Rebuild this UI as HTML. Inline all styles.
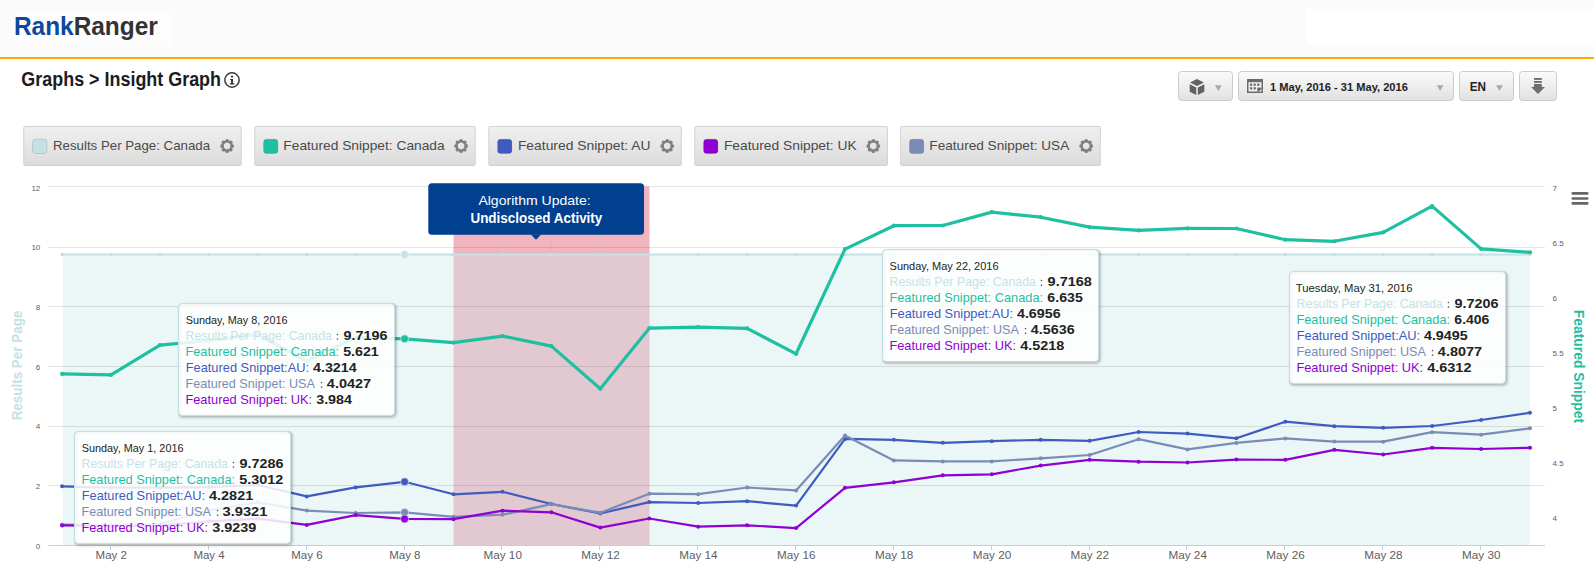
<!DOCTYPE html>
<html><head><meta charset="utf-8"><title>Insight Graph</title>
<style>
html,body{margin:0;padding:0;width:1594px;height:570px;overflow:hidden;background:#fff;}
svg text{font-family:"Liberation Sans",sans-serif;}
</style></head><body>
<svg width="1594" height="570" viewBox="0 0 1594 570" style="position:absolute;left:0;top:0">
<defs>
<linearGradient id="gb" x1="0" y1="0" x2="0" y2="1"><stop offset="0" stop-color="#fbfbfb"/><stop offset="1" stop-color="#e1e1e1"/></linearGradient>
<linearGradient id="gl" x1="0" y1="0" x2="0" y2="1"><stop offset="0" stop-color="#f0f0f0"/><stop offset="1" stop-color="#dcdcdc"/></linearGradient>
</defs>
<rect x="0" y="0" width="1594" height="57" fill="#fbfbfb"/>
<rect x="16" y="13" width="157" height="34" fill="#fdfdfd"/>
<rect x="1307" y="9" width="287" height="36" fill="#ffffff"/>
<rect x="0" y="57" width="1594" height="2" fill="#fcae00"/>
<text x="13.93" y="34.9" font-size="26.3" font-weight="bold" fill="#333" textLength="143.82" lengthAdjust="spacingAndGlyphs" ><tspan fill="#0b489e">Rank</tspan><tspan fill="#333333">Ranger</tspan></text>
<text x="21.37" y="85.9" font-size="20.3" font-weight="bold" fill="#1c1c1c" textLength="199.65" lengthAdjust="spacingAndGlyphs" >Graphs &gt; Insight Graph</text>
<circle cx="232" cy="80" r="7.2" fill="none" stroke="#3a3a3a" stroke-width="1.5"/>
<rect x="231" y="79" width="2.1" height="5.2" fill="#3a3a3a"/><rect x="229.8" y="83.3" width="4.6" height="1.2" fill="#3a3a3a"/><rect x="230" y="79" width="2" height="1" fill="#3a3a3a"/><circle cx="232.05" cy="76.6" r="1.15" fill="#3a3a3a"/>
<rect x="1178.5" y="71.5" width="54" height="29" rx="3" fill="url(#gb)" stroke="#cccccc"/>
<rect x="1238.5" y="71.5" width="215" height="29" rx="3" fill="url(#gb)" stroke="#cccccc"/>
<rect x="1459.5" y="71.5" width="54" height="29" rx="3" fill="url(#gb)" stroke="#cccccc"/>
<rect x="1519.5" y="71.5" width="37" height="29" rx="3" fill="url(#gb)" stroke="#cccccc"/>
<g fill="#626262"><path d="M1197,79 L1203.9,82.5 L1197,86 L1190.1,82.5 Z"/><path d="M1189.7,84.2 L1196.2,87.5 L1196.2,95 L1189.7,91.7 Z"/><path d="M1204.3,84.2 L1197.8,87.5 L1197.8,95 L1204.3,91.7 Z"/></g>
<path d="M1215,85.2 L1221.7,85.2 L1218.35,91 Z" fill="#a8a8a8"/>
<path d="M1436.9,85.2 L1443.3,85.2 L1440.1,91 Z" fill="#a8a8a8"/>
<path d="M1496.2,85.3 L1502.8,85.3 L1499.5,90.9 Z" fill="#a8a8a8"/>
<g><rect x="1247" y="79" width="16" height="14" fill="#6b6b6b"/><rect x="1248.5" y="82.2" width="13" height="9.3" fill="#efefef"/><g fill="#6b6b6b"><rect x="1250" y="83.6" width="2.2" height="2.2"/><rect x="1253.6" y="83.6" width="2.2" height="2.2"/><rect x="1257.2" y="83.6" width="2.2" height="2.2"/><rect x="1250" y="87.2" width="2.2" height="2.2"/><rect x="1253.6" y="87.2" width="2.2" height="2.2"/><rect x="1257.3" y="87.6" width="4.2" height="3.9"/></g><path d="M1259,91.4 L1261.4,89 L1261.4,91.4 Z" fill="#efefef"/></g>
<text x="1270.08" y="90.9" font-size="11.6" font-weight="bold" fill="#222" textLength="137.79" lengthAdjust="spacingAndGlyphs" >1 May, 2016 - 31 May, 2016</text>
<text x="1469.65" y="90.7" font-size="12.3" font-weight="bold" fill="#222" textLength="16.30" lengthAdjust="spacingAndGlyphs" >EN</text>
<g fill="#6e6e6e"><rect x="1534" y="78" width="7.8" height="1.9"/><rect x="1534" y="81" width="7.8" height="1.9"/><rect x="1534" y="84" width="7.8" height="3.3"/><path d="M1531,87.1 L1545,87.1 L1538,94 Z"/></g>
<rect x="23.8" y="126.5" width="217.4" height="39" rx="1.2" fill="url(#gl)" stroke="#d2d2d2"/>
<rect x="32.6" y="139.2" width="14.3" height="14.3" rx="3" fill="#c4e2e6" stroke="#000" stroke-opacity="0.12" stroke-width="1"/>
<text x="53.04" y="149.9" font-size="13.2" font-weight="normal" fill="#4a4a4a" textLength="157.02" lengthAdjust="spacingAndGlyphs" >Results Per Page: Canada</text>
<circle cx="227.10" cy="146.00" r="4.55" fill="none" stroke="#808080" stroke-width="2.3"/><circle cx="232.25" cy="146.00" r="1.85" fill="#808080"/><circle cx="230.74" cy="149.64" r="1.85" fill="#808080"/><circle cx="227.10" cy="151.15" r="1.85" fill="#808080"/><circle cx="223.46" cy="149.64" r="1.85" fill="#808080"/><circle cx="221.95" cy="146.00" r="1.85" fill="#808080"/><circle cx="223.46" cy="142.36" r="1.85" fill="#808080"/><circle cx="227.10" cy="140.85" r="1.85" fill="#808080"/><circle cx="230.74" cy="142.36" r="1.85" fill="#808080"/>
<rect x="254.8" y="126.5" width="220.4" height="39" rx="1.2" fill="url(#gl)" stroke="#d2d2d2"/>
<rect x="263.6" y="139.2" width="14.3" height="14.3" rx="3" fill="#1fbfa2" stroke="#000" stroke-opacity="0.12" stroke-width="1"/>
<text x="283.34" y="149.9" font-size="13.2" font-weight="normal" fill="#4a4a4a" textLength="161.33" lengthAdjust="spacingAndGlyphs" >Featured Snippet: Canada</text>
<circle cx="461.10" cy="146.00" r="4.55" fill="none" stroke="#808080" stroke-width="2.3"/><circle cx="466.25" cy="146.00" r="1.85" fill="#808080"/><circle cx="464.74" cy="149.64" r="1.85" fill="#808080"/><circle cx="461.10" cy="151.15" r="1.85" fill="#808080"/><circle cx="457.46" cy="149.64" r="1.85" fill="#808080"/><circle cx="455.95" cy="146.00" r="1.85" fill="#808080"/><circle cx="457.46" cy="142.36" r="1.85" fill="#808080"/><circle cx="461.10" cy="140.85" r="1.85" fill="#808080"/><circle cx="464.74" cy="142.36" r="1.85" fill="#808080"/>
<rect x="488.8" y="126.5" width="192.5" height="39" rx="1.2" fill="url(#gl)" stroke="#d2d2d2"/>
<rect x="497.6" y="139.2" width="14.3" height="14.3" rx="3" fill="#3f5bbf" stroke="#000" stroke-opacity="0.12" stroke-width="1"/>
<text x="517.92" y="149.9" font-size="13.2" font-weight="normal" fill="#4a4a4a" textLength="132.55" lengthAdjust="spacingAndGlyphs" >Featured Snippet: AU</text>
<circle cx="667.20" cy="146.00" r="4.55" fill="none" stroke="#808080" stroke-width="2.3"/><circle cx="672.35" cy="146.00" r="1.85" fill="#808080"/><circle cx="670.84" cy="149.64" r="1.85" fill="#808080"/><circle cx="667.20" cy="151.15" r="1.85" fill="#808080"/><circle cx="663.56" cy="149.64" r="1.85" fill="#808080"/><circle cx="662.05" cy="146.00" r="1.85" fill="#808080"/><circle cx="663.56" cy="142.36" r="1.85" fill="#808080"/><circle cx="667.20" cy="140.85" r="1.85" fill="#808080"/><circle cx="670.84" cy="142.36" r="1.85" fill="#808080"/>
<rect x="694.8" y="126.5" width="192.6" height="39" rx="1.2" fill="url(#gl)" stroke="#d2d2d2"/>
<rect x="703.6" y="139.2" width="14.3" height="14.3" rx="3" fill="#8f00d2" stroke="#000" stroke-opacity="0.12" stroke-width="1"/>
<text x="723.94" y="149.9" font-size="13.2" font-weight="normal" fill="#4a4a4a" textLength="132.72" lengthAdjust="spacingAndGlyphs" >Featured Snippet: UK</text>
<circle cx="873.30" cy="146.00" r="4.55" fill="none" stroke="#808080" stroke-width="2.3"/><circle cx="878.45" cy="146.00" r="1.85" fill="#808080"/><circle cx="876.94" cy="149.64" r="1.85" fill="#808080"/><circle cx="873.30" cy="151.15" r="1.85" fill="#808080"/><circle cx="869.66" cy="149.64" r="1.85" fill="#808080"/><circle cx="868.15" cy="146.00" r="1.85" fill="#808080"/><circle cx="869.66" cy="142.36" r="1.85" fill="#808080"/><circle cx="873.30" cy="140.85" r="1.85" fill="#808080"/><circle cx="876.94" cy="142.36" r="1.85" fill="#808080"/>
<rect x="900.7" y="126.5" width="199.6" height="39" rx="1.2" fill="url(#gl)" stroke="#d2d2d2"/>
<rect x="909.5" y="139.2" width="14.3" height="14.3" rx="3" fill="#7a8cb6" stroke="#000" stroke-opacity="0.12" stroke-width="1"/>
<text x="929.39" y="149.9" font-size="13.2" font-weight="normal" fill="#4a4a4a" textLength="139.83" lengthAdjust="spacingAndGlyphs" >Featured Snippet: USA</text>
<circle cx="1086.20" cy="146.00" r="4.55" fill="none" stroke="#808080" stroke-width="2.3"/><circle cx="1091.35" cy="146.00" r="1.85" fill="#808080"/><circle cx="1089.84" cy="149.64" r="1.85" fill="#808080"/><circle cx="1086.20" cy="151.15" r="1.85" fill="#808080"/><circle cx="1082.56" cy="149.64" r="1.85" fill="#808080"/><circle cx="1081.05" cy="146.00" r="1.85" fill="#808080"/><circle cx="1082.56" cy="142.36" r="1.85" fill="#808080"/><circle cx="1086.20" cy="140.85" r="1.85" fill="#808080"/><circle cx="1089.84" cy="142.36" r="1.85" fill="#808080"/>
<rect x="453.5" y="186.5" width="196" height="359" fill="#e8889a" fill-opacity="0.62"/>
<line x1="551.5" y1="186.5" x2="551.5" y2="545.5" stroke="#e8899e" stroke-opacity="0.15"/>
<path d="M62.9,254.6 L111.0,254.6 L160.0,254.6 L208.9,254.6 L257.8,254.6 L306.8,254.6 L355.7,254.6 L404.6,254.6 L453.5,254.6 L502.5,254.6 L551.4,254.6 L600.3,254.6 L649.3,254.6 L698.2,254.6 L747.1,254.6 L796.1,254.6 L845.0,254.6 L893.9,254.6 L942.8,254.6 L991.8,254.6 L1040.7,254.6 L1089.6,254.6 L1138.6,254.6 L1187.5,254.6 L1236.4,254.6 L1285.3,254.6 L1334.3,254.6 L1383.2,254.6 L1432.1,254.6 L1481.1,254.6 L1530.0,254.6 L1530.0,545.5 L62.9,545.5 Z" fill="#cde8ea" fill-opacity="0.4"/>
<line x1="48" y1="186.5" x2="1545" y2="186.5" stroke="#000" stroke-opacity="0.1"/>
<line x1="48" y1="247.5" x2="1545" y2="247.5" stroke="#000" stroke-opacity="0.1"/>
<line x1="48" y1="306.5" x2="1545" y2="306.5" stroke="#000" stroke-opacity="0.1"/>
<line x1="48" y1="366.5" x2="1545" y2="366.5" stroke="#000" stroke-opacity="0.1"/>
<line x1="48" y1="426.5" x2="1545" y2="426.5" stroke="#000" stroke-opacity="0.1"/>
<line x1="48" y1="485.5" x2="1545" y2="485.5" stroke="#000" stroke-opacity="0.1"/>
<line x1="48" y1="545.5" x2="1545" y2="545.5" stroke="#c0d0e0"/>
<line x1="110.5" y1="546" x2="110.5" y2="550" stroke="#c0d0e0"/>
<text x="95.6" y="558.6" font-size="10.9" fill="#606060" textLength="31.3" lengthAdjust="spacingAndGlyphs">May 2</text>
<line x1="208.5" y1="546" x2="208.5" y2="550" stroke="#c0d0e0"/>
<text x="193.4" y="558.6" font-size="10.9" fill="#606060" textLength="31.3" lengthAdjust="spacingAndGlyphs">May 4</text>
<line x1="306.5" y1="546" x2="306.5" y2="550" stroke="#c0d0e0"/>
<text x="291.3" y="558.6" font-size="10.9" fill="#606060" textLength="31.3" lengthAdjust="spacingAndGlyphs">May 6</text>
<line x1="404.5" y1="546" x2="404.5" y2="550" stroke="#c0d0e0"/>
<text x="389.2" y="558.6" font-size="10.9" fill="#606060" textLength="31.3" lengthAdjust="spacingAndGlyphs">May 8</text>
<line x1="501.5" y1="546" x2="501.5" y2="550" stroke="#c0d0e0"/>
<text x="483.5" y="558.6" font-size="10.9" fill="#606060" textLength="38.4" lengthAdjust="spacingAndGlyphs">May 10</text>
<line x1="599.5" y1="546" x2="599.5" y2="550" stroke="#c0d0e0"/>
<text x="581.3" y="558.6" font-size="10.9" fill="#606060" textLength="38.4" lengthAdjust="spacingAndGlyphs">May 12</text>
<line x1="697.5" y1="546" x2="697.5" y2="550" stroke="#c0d0e0"/>
<text x="679.2" y="558.6" font-size="10.9" fill="#606060" textLength="38.4" lengthAdjust="spacingAndGlyphs">May 14</text>
<line x1="795.5" y1="546" x2="795.5" y2="550" stroke="#c0d0e0"/>
<text x="777.1" y="558.6" font-size="10.9" fill="#606060" textLength="38.4" lengthAdjust="spacingAndGlyphs">May 16</text>
<line x1="893.5" y1="546" x2="893.5" y2="550" stroke="#c0d0e0"/>
<text x="874.9" y="558.6" font-size="10.9" fill="#606060" textLength="38.4" lengthAdjust="spacingAndGlyphs">May 18</text>
<line x1="991.5" y1="546" x2="991.5" y2="550" stroke="#c0d0e0"/>
<text x="972.8" y="558.6" font-size="10.9" fill="#606060" textLength="38.4" lengthAdjust="spacingAndGlyphs">May 20</text>
<line x1="1089.5" y1="546" x2="1089.5" y2="550" stroke="#c0d0e0"/>
<text x="1070.6" y="558.6" font-size="10.9" fill="#606060" textLength="38.4" lengthAdjust="spacingAndGlyphs">May 22</text>
<line x1="1186.5" y1="546" x2="1186.5" y2="550" stroke="#c0d0e0"/>
<text x="1168.5" y="558.6" font-size="10.9" fill="#606060" textLength="38.4" lengthAdjust="spacingAndGlyphs">May 24</text>
<line x1="1284.5" y1="546" x2="1284.5" y2="550" stroke="#c0d0e0"/>
<text x="1266.3" y="558.6" font-size="10.9" fill="#606060" textLength="38.4" lengthAdjust="spacingAndGlyphs">May 26</text>
<line x1="1382.5" y1="546" x2="1382.5" y2="550" stroke="#c0d0e0"/>
<text x="1364.2" y="558.6" font-size="10.9" fill="#606060" textLength="38.4" lengthAdjust="spacingAndGlyphs">May 28</text>
<line x1="1480.5" y1="546" x2="1480.5" y2="550" stroke="#c0d0e0"/>
<text x="1462.1" y="558.6" font-size="10.9" fill="#606060" textLength="38.4" lengthAdjust="spacingAndGlyphs">May 30</text>
<text x="40.3" y="191" font-size="8" fill="#606060" text-anchor="end">12</text>
<text x="40.3" y="250" font-size="8" fill="#606060" text-anchor="end">10</text>
<text x="40.3" y="310" font-size="8" fill="#606060" text-anchor="end">8</text>
<text x="40.3" y="370" font-size="8" fill="#606060" text-anchor="end">6</text>
<text x="40.3" y="429" font-size="8" fill="#606060" text-anchor="end">4</text>
<text x="40.3" y="489" font-size="8" fill="#606060" text-anchor="end">2</text>
<text x="40.3" y="549" font-size="8" fill="#606060" text-anchor="end">0</text>
<text x="1552.6" y="190.9" font-size="8" fill="#606060">7</text>
<text x="1552.6" y="245.9" font-size="8" fill="#606060">6.5</text>
<text x="1552.6" y="300.9" font-size="8" fill="#606060">6</text>
<text x="1552.6" y="355.9" font-size="8" fill="#606060">5.5</text>
<text x="1552.6" y="410.9" font-size="8" fill="#606060">5</text>
<text x="1552.6" y="465.9" font-size="8" fill="#606060">4.5</text>
<text x="1552.6" y="520.9" font-size="8" fill="#606060">4</text>
<polyline points="62.1,254.6 111.0,254.6 160.0,254.6 208.9,254.6 257.8,254.6 306.8,254.6 355.7,254.6 404.6,254.6 453.5,254.6 502.5,254.6 551.4,254.6 600.3,254.6 649.3,254.6 698.2,254.6 747.1,254.6 796.1,254.6 845.0,254.6 893.9,254.6 942.8,254.6 991.8,254.6 1040.7,254.6 1089.6,254.6 1138.6,254.6 1187.5,254.6 1236.4,254.6 1285.3,254.6 1334.3,254.6 1383.2,254.6 1432.1,254.6 1481.1,254.6 1530.0,254.6" fill="none" stroke="#c4e2e6" stroke-width="2" stroke-linejoin="round"/>
<circle cx="62.1" cy="254.6" r="1.8" fill="#c4e2e6"/><circle cx="111.0" cy="254.6" r="1.8" fill="#c4e2e6"/><circle cx="160.0" cy="254.6" r="1.8" fill="#c4e2e6"/><circle cx="208.9" cy="254.6" r="1.8" fill="#c4e2e6"/><circle cx="257.8" cy="254.6" r="1.8" fill="#c4e2e6"/><circle cx="306.8" cy="254.6" r="1.8" fill="#c4e2e6"/><circle cx="355.7" cy="254.6" r="1.8" fill="#c4e2e6"/><circle cx="404.6" cy="254.6" r="4.0" fill="#c4e2e6" stroke="#fff" stroke-opacity="0.55" stroke-width="1"/><circle cx="453.5" cy="254.6" r="1.8" fill="#c4e2e6"/><circle cx="502.5" cy="254.6" r="1.8" fill="#c4e2e6"/><circle cx="551.4" cy="254.6" r="1.8" fill="#c4e2e6"/><circle cx="600.3" cy="254.6" r="1.8" fill="#c4e2e6"/><circle cx="649.3" cy="254.6" r="1.8" fill="#c4e2e6"/><circle cx="698.2" cy="254.6" r="1.8" fill="#c4e2e6"/><circle cx="747.1" cy="254.6" r="1.8" fill="#c4e2e6"/><circle cx="796.1" cy="254.6" r="1.8" fill="#c4e2e6"/><circle cx="845.0" cy="254.6" r="1.8" fill="#c4e2e6"/><circle cx="893.9" cy="254.6" r="1.8" fill="#c4e2e6"/><circle cx="942.8" cy="254.6" r="1.8" fill="#c4e2e6"/><circle cx="991.8" cy="254.6" r="1.8" fill="#c4e2e6"/><circle cx="1040.7" cy="254.6" r="1.8" fill="#c4e2e6"/><circle cx="1089.6" cy="254.6" r="1.8" fill="#c4e2e6"/><circle cx="1138.6" cy="254.6" r="1.8" fill="#c4e2e6"/><circle cx="1187.5" cy="254.6" r="1.8" fill="#c4e2e6"/><circle cx="1236.4" cy="254.6" r="1.8" fill="#c4e2e6"/><circle cx="1285.3" cy="254.6" r="1.8" fill="#c4e2e6"/><circle cx="1334.3" cy="254.6" r="1.8" fill="#c4e2e6"/><circle cx="1383.2" cy="254.6" r="1.8" fill="#c4e2e6"/><circle cx="1432.1" cy="254.6" r="1.8" fill="#c4e2e6"/><circle cx="1481.1" cy="254.6" r="1.8" fill="#c4e2e6"/><circle cx="1530.0" cy="254.6" r="1.8" fill="#c4e2e6"/>
<polyline points="62.1,373.9 111.0,374.9 160.0,345.1 208.9,340.5 257.8,334.5 306.8,361.0 355.7,337.3 404.6,338.8 453.5,342.6 502.5,336.1 551.4,346.1 600.3,388.8 649.3,328.2 698.2,327.1 747.1,328.4 796.1,353.8 845.0,249.1 893.9,225.7 942.8,225.5 991.8,212.1 1040.7,217.2 1089.6,227.1 1138.6,230.4 1187.5,228.4 1236.4,228.5 1285.3,239.7 1334.3,241.3 1383.2,232.4 1432.1,206.1 1481.1,248.9 1530.0,252.3" fill="none" stroke="#1fbfa2" stroke-width="3.2" stroke-linejoin="round"/>
<circle cx="62.1" cy="373.9" r="2.1" fill="#1fbfa2"/><circle cx="111.0" cy="374.9" r="2.1" fill="#1fbfa2"/><circle cx="160.0" cy="345.1" r="2.1" fill="#1fbfa2"/><circle cx="208.9" cy="340.5" r="2.1" fill="#1fbfa2"/><circle cx="257.8" cy="334.5" r="2.1" fill="#1fbfa2"/><circle cx="306.8" cy="361.0" r="2.1" fill="#1fbfa2"/><circle cx="355.7" cy="337.3" r="2.1" fill="#1fbfa2"/><circle cx="404.6" cy="338.8" r="4.0" fill="#1fbfa2" stroke="#fff" stroke-opacity="0.55" stroke-width="1"/><circle cx="453.5" cy="342.6" r="2.1" fill="#1fbfa2"/><circle cx="502.5" cy="336.1" r="2.1" fill="#1fbfa2"/><circle cx="551.4" cy="346.1" r="2.1" fill="#1fbfa2"/><circle cx="600.3" cy="388.8" r="2.1" fill="#1fbfa2"/><circle cx="649.3" cy="328.2" r="2.1" fill="#1fbfa2"/><circle cx="698.2" cy="327.1" r="2.1" fill="#1fbfa2"/><circle cx="747.1" cy="328.4" r="2.1" fill="#1fbfa2"/><circle cx="796.1" cy="353.8" r="2.1" fill="#1fbfa2"/><circle cx="845.0" cy="249.1" r="2.1" fill="#1fbfa2"/><circle cx="893.9" cy="225.7" r="2.1" fill="#1fbfa2"/><circle cx="942.8" cy="225.5" r="2.1" fill="#1fbfa2"/><circle cx="991.8" cy="212.1" r="2.1" fill="#1fbfa2"/><circle cx="1040.7" cy="217.2" r="2.1" fill="#1fbfa2"/><circle cx="1089.6" cy="227.1" r="2.1" fill="#1fbfa2"/><circle cx="1138.6" cy="230.4" r="2.1" fill="#1fbfa2"/><circle cx="1187.5" cy="228.4" r="2.1" fill="#1fbfa2"/><circle cx="1236.4" cy="228.5" r="2.1" fill="#1fbfa2"/><circle cx="1285.3" cy="239.7" r="2.1" fill="#1fbfa2"/><circle cx="1334.3" cy="241.3" r="2.1" fill="#1fbfa2"/><circle cx="1383.2" cy="232.4" r="2.1" fill="#1fbfa2"/><circle cx="1432.1" cy="206.1" r="2.1" fill="#1fbfa2"/><circle cx="1481.1" cy="248.9" r="2.1" fill="#1fbfa2"/><circle cx="1530.0" cy="252.3" r="2.1" fill="#1fbfa2"/>
<polyline points="62.1,486.3 111.0,487.7 160.0,487.7 208.9,487.1 257.8,485.0 306.8,496.4 355.7,487.4 404.6,481.8 453.5,494.3 502.5,491.8 551.4,504.0 600.3,513.5 649.3,502.1 698.2,503.0 747.1,501.2 796.1,505.6 845.0,438.9 893.9,439.8 942.8,442.8 991.8,441.2 1040.7,439.8 1089.6,440.8 1138.6,432.0 1187.5,433.6 1236.4,438.3 1285.3,421.7 1334.3,426.2 1383.2,427.8 1432.1,426.0 1481.1,420.0 1530.0,412.8" fill="none" stroke="#3f5bbf" stroke-width="2.2" stroke-linejoin="round"/>
<circle cx="62.1" cy="486.3" r="2.0" fill="#3f5bbf"/><circle cx="111.0" cy="487.7" r="2.0" fill="#3f5bbf"/><circle cx="160.0" cy="487.7" r="2.0" fill="#3f5bbf"/><circle cx="208.9" cy="487.1" r="2.0" fill="#3f5bbf"/><circle cx="257.8" cy="485.0" r="2.0" fill="#3f5bbf"/><circle cx="306.8" cy="496.4" r="2.0" fill="#3f5bbf"/><circle cx="355.7" cy="487.4" r="2.0" fill="#3f5bbf"/><circle cx="404.6" cy="481.8" r="4.0" fill="#3f5bbf" stroke="#fff" stroke-opacity="0.55" stroke-width="1"/><circle cx="453.5" cy="494.3" r="2.0" fill="#3f5bbf"/><circle cx="502.5" cy="491.8" r="2.0" fill="#3f5bbf"/><circle cx="551.4" cy="504.0" r="2.0" fill="#3f5bbf"/><circle cx="600.3" cy="513.5" r="2.0" fill="#3f5bbf"/><circle cx="649.3" cy="502.1" r="2.0" fill="#3f5bbf"/><circle cx="698.2" cy="503.0" r="2.0" fill="#3f5bbf"/><circle cx="747.1" cy="501.2" r="2.0" fill="#3f5bbf"/><circle cx="796.1" cy="505.6" r="2.0" fill="#3f5bbf"/><circle cx="845.0" cy="438.9" r="2.0" fill="#3f5bbf"/><circle cx="893.9" cy="439.8" r="2.0" fill="#3f5bbf"/><circle cx="942.8" cy="442.8" r="2.0" fill="#3f5bbf"/><circle cx="991.8" cy="441.2" r="2.0" fill="#3f5bbf"/><circle cx="1040.7" cy="439.8" r="2.0" fill="#3f5bbf"/><circle cx="1089.6" cy="440.8" r="2.0" fill="#3f5bbf"/><circle cx="1138.6" cy="432.0" r="2.0" fill="#3f5bbf"/><circle cx="1187.5" cy="433.6" r="2.0" fill="#3f5bbf"/><circle cx="1236.4" cy="438.3" r="2.0" fill="#3f5bbf"/><circle cx="1285.3" cy="421.7" r="2.0" fill="#3f5bbf"/><circle cx="1334.3" cy="426.2" r="2.0" fill="#3f5bbf"/><circle cx="1383.2" cy="427.8" r="2.0" fill="#3f5bbf"/><circle cx="1432.1" cy="426.0" r="2.0" fill="#3f5bbf"/><circle cx="1481.1" cy="420.0" r="2.0" fill="#3f5bbf"/><circle cx="1530.0" cy="412.8" r="2.0" fill="#3f5bbf"/>
<polyline points="62.1,524.5 111.0,525.0 160.0,524.0 208.9,510.3 257.8,502.3 306.8,510.6 355.7,513.0 404.6,512.3 453.5,516.8 502.5,514.7 551.4,504.2 600.3,512.7 649.3,493.7 698.2,494.2 747.1,487.5 796.1,490.4 845.0,435.4 893.9,460.4 942.8,461.4 991.8,461.4 1040.7,458.3 1089.6,455.0 1138.6,439.2 1187.5,449.4 1236.4,442.9 1285.3,438.4 1334.3,441.6 1383.2,441.7 1432.1,432.2 1481.1,434.7 1530.0,428.3" fill="none" stroke="#7a8cb6" stroke-width="2.2" stroke-linejoin="round"/>
<circle cx="62.1" cy="524.5" r="2.0" fill="#7a8cb6"/><circle cx="111.0" cy="525.0" r="2.0" fill="#7a8cb6"/><circle cx="160.0" cy="524.0" r="2.0" fill="#7a8cb6"/><circle cx="208.9" cy="510.3" r="2.0" fill="#7a8cb6"/><circle cx="257.8" cy="502.3" r="2.0" fill="#7a8cb6"/><circle cx="306.8" cy="510.6" r="2.0" fill="#7a8cb6"/><circle cx="355.7" cy="513.0" r="2.0" fill="#7a8cb6"/><circle cx="404.6" cy="512.3" r="4.0" fill="#7a8cb6" stroke="#fff" stroke-opacity="0.55" stroke-width="1"/><circle cx="453.5" cy="516.8" r="2.0" fill="#7a8cb6"/><circle cx="502.5" cy="514.7" r="2.0" fill="#7a8cb6"/><circle cx="551.4" cy="504.2" r="2.0" fill="#7a8cb6"/><circle cx="600.3" cy="512.7" r="2.0" fill="#7a8cb6"/><circle cx="649.3" cy="493.7" r="2.0" fill="#7a8cb6"/><circle cx="698.2" cy="494.2" r="2.0" fill="#7a8cb6"/><circle cx="747.1" cy="487.5" r="2.0" fill="#7a8cb6"/><circle cx="796.1" cy="490.4" r="2.0" fill="#7a8cb6"/><circle cx="845.0" cy="435.4" r="2.0" fill="#7a8cb6"/><circle cx="893.9" cy="460.4" r="2.0" fill="#7a8cb6"/><circle cx="942.8" cy="461.4" r="2.0" fill="#7a8cb6"/><circle cx="991.8" cy="461.4" r="2.0" fill="#7a8cb6"/><circle cx="1040.7" cy="458.3" r="2.0" fill="#7a8cb6"/><circle cx="1089.6" cy="455.0" r="2.0" fill="#7a8cb6"/><circle cx="1138.6" cy="439.2" r="2.0" fill="#7a8cb6"/><circle cx="1187.5" cy="449.4" r="2.0" fill="#7a8cb6"/><circle cx="1236.4" cy="442.9" r="2.0" fill="#7a8cb6"/><circle cx="1285.3" cy="438.4" r="2.0" fill="#7a8cb6"/><circle cx="1334.3" cy="441.6" r="2.0" fill="#7a8cb6"/><circle cx="1383.2" cy="441.7" r="2.0" fill="#7a8cb6"/><circle cx="1432.1" cy="432.2" r="2.0" fill="#7a8cb6"/><circle cx="1481.1" cy="434.7" r="2.0" fill="#7a8cb6"/><circle cx="1530.0" cy="428.3" r="2.0" fill="#7a8cb6"/>
<polyline points="62.1,525.4 111.0,526.0 160.0,525.5 208.9,521.3 257.8,518.7 306.8,524.9 355.7,515.1 404.6,518.9 453.5,519.2 502.5,510.7 551.4,512.3 600.3,527.6 649.3,518.5 698.2,526.7 747.1,525.3 796.1,528.1 845.0,487.8 893.9,482.3 942.8,475.3 991.8,474.3 1040.7,465.6 1089.6,459.8 1138.6,461.7 1187.5,462.5 1236.4,459.6 1285.3,459.8 1334.3,449.8 1383.2,454.5 1432.1,447.8 1481.1,449.0 1530.0,447.8" fill="none" stroke="#8f00d2" stroke-width="2.2" stroke-linejoin="round"/>
<circle cx="62.1" cy="525.4" r="2.0" fill="#8f00d2"/><circle cx="111.0" cy="526.0" r="2.0" fill="#8f00d2"/><circle cx="160.0" cy="525.5" r="2.0" fill="#8f00d2"/><circle cx="208.9" cy="521.3" r="2.0" fill="#8f00d2"/><circle cx="257.8" cy="518.7" r="2.0" fill="#8f00d2"/><circle cx="306.8" cy="524.9" r="2.0" fill="#8f00d2"/><circle cx="355.7" cy="515.1" r="2.0" fill="#8f00d2"/><circle cx="404.6" cy="518.9" r="4.0" fill="#8f00d2" stroke="#fff" stroke-opacity="0.55" stroke-width="1"/><circle cx="453.5" cy="519.2" r="2.0" fill="#8f00d2"/><circle cx="502.5" cy="510.7" r="2.0" fill="#8f00d2"/><circle cx="551.4" cy="512.3" r="2.0" fill="#8f00d2"/><circle cx="600.3" cy="527.6" r="2.0" fill="#8f00d2"/><circle cx="649.3" cy="518.5" r="2.0" fill="#8f00d2"/><circle cx="698.2" cy="526.7" r="2.0" fill="#8f00d2"/><circle cx="747.1" cy="525.3" r="2.0" fill="#8f00d2"/><circle cx="796.1" cy="528.1" r="2.0" fill="#8f00d2"/><circle cx="845.0" cy="487.8" r="2.0" fill="#8f00d2"/><circle cx="893.9" cy="482.3" r="2.0" fill="#8f00d2"/><circle cx="942.8" cy="475.3" r="2.0" fill="#8f00d2"/><circle cx="991.8" cy="474.3" r="2.0" fill="#8f00d2"/><circle cx="1040.7" cy="465.6" r="2.0" fill="#8f00d2"/><circle cx="1089.6" cy="459.8" r="2.0" fill="#8f00d2"/><circle cx="1138.6" cy="461.7" r="2.0" fill="#8f00d2"/><circle cx="1187.5" cy="462.5" r="2.0" fill="#8f00d2"/><circle cx="1236.4" cy="459.6" r="2.0" fill="#8f00d2"/><circle cx="1285.3" cy="459.8" r="2.0" fill="#8f00d2"/><circle cx="1334.3" cy="449.8" r="2.0" fill="#8f00d2"/><circle cx="1383.2" cy="454.5" r="2.0" fill="#8f00d2"/><circle cx="1432.1" cy="447.8" r="2.0" fill="#8f00d2"/><circle cx="1481.1" cy="449.0" r="2.0" fill="#8f00d2"/><circle cx="1530.0" cy="447.8" r="2.0" fill="#8f00d2"/>
<text x="310.34" y="0" font-size="14.5" font-weight="bold" fill="#c4e2e6" textLength="109.73" lengthAdjust="spacingAndGlyphs" transform="translate(21.8,730.7) rotate(-90)">Results Per Page</text>
<text x="309.78" y="0" font-size="14.2" font-weight="bold" fill="#1fbfa2" textLength="113.40" lengthAdjust="spacingAndGlyphs" transform="translate(1574,0) rotate(90)">Featured Snippet</text>
<line x1="1572.8" y1="193.4" x2="1587.2" y2="193.4" stroke="#666" stroke-width="2.7" stroke-linecap="round"/>
<line x1="1572.8" y1="198.5" x2="1587.2" y2="198.5" stroke="#666" stroke-width="2.7" stroke-linecap="round"/>
<line x1="1572.8" y1="203.4" x2="1587.2" y2="203.4" stroke="#666" stroke-width="2.7" stroke-linecap="round"/>
<rect x="428.3" y="183.3" width="215.7" height="51.5" rx="3.5" fill="#00408f"/>
<path d="M530.8,234.6 L536,239.8 L541.2,234.6 Z" fill="#00408f"/>
<text x="478.40" y="205.1" font-size="13.5" font-weight="normal" fill="#fff" textLength="112.31" lengthAdjust="spacingAndGlyphs" >Algorithm Update:</text>
<text x="470.42" y="222.9" font-size="13.8" font-weight="bold" fill="#fff" textLength="131.94" lengthAdjust="spacingAndGlyphs" >Undisclosed Activity</text>
<rect x="76.0" y="433.0" width="216" height="112" rx="3.5" fill="none" stroke="#000" stroke-opacity="0.05" stroke-width="5"/><rect x="75.5" y="432.5" width="216" height="112" rx="3.5" fill="none" stroke="#000" stroke-opacity="0.1" stroke-width="3"/><rect x="75.0" y="432.0" width="216" height="112" rx="3.5" fill="none" stroke="#000" stroke-opacity="0.15" stroke-width="1"/><rect x="74.5" y="431.5" width="216" height="112" rx="3.5" fill="#ffffff" fill-opacity="0.86" stroke="#c4dfe2" stroke-width="1"/><text x="81.65" y="451.9" font-size="10.3" font-weight="normal" fill="#222" textLength="101.89" lengthAdjust="spacingAndGlyphs" >Sunday, May 1, 2016</text><text x="81.61" y="467.8" font-size="11.9" font-weight="normal" fill="#c4e2e6" textLength="146.32" lengthAdjust="spacingAndGlyphs" >Results Per Page: Canada</text><rect x="232.80" y="461.80" width="1.3" height="1.4" fill="#555"/><rect x="232.80" y="466.40" width="1.3" height="1.4" fill="#555"/><text x="239.60" y="467.8" font-size="13.0" font-weight="bold" fill="#222" textLength="43.99" lengthAdjust="spacingAndGlyphs" >9.7286</text><text x="81.43" y="483.83" font-size="11.9" font-weight="normal" fill="#1fbfa2" textLength="153.67" lengthAdjust="spacingAndGlyphs" >Featured Snippet: Canada:</text><text x="239.17" y="483.83" font-size="13.0" font-weight="bold" fill="#222" textLength="44.06" lengthAdjust="spacingAndGlyphs" >5.3012</text><text x="81.66" y="499.86" font-size="11.9" font-weight="normal" fill="#3f5bbf" textLength="123.42" lengthAdjust="spacingAndGlyphs" >Featured Snippet:AU:</text><text x="208.96" y="499.86" font-size="13.0" font-weight="bold" fill="#222" textLength="44.32" lengthAdjust="spacingAndGlyphs" >4.2821</text><text x="81.53" y="515.89" font-size="11.9" font-weight="normal" fill="#7a8cb6" textLength="129.29" lengthAdjust="spacingAndGlyphs" >Featured Snippet: USA</text><rect x="216.90" y="509.89" width="1.3" height="1.4" fill="#555"/><rect x="216.90" y="514.49" width="1.3" height="1.4" fill="#555"/><text x="222.49" y="515.89" font-size="13.0" font-weight="bold" fill="#222" textLength="44.97" lengthAdjust="spacingAndGlyphs" >3.9321</text><text x="81.43" y="531.92" font-size="11.9" font-weight="normal" fill="#8f00d2" textLength="126.68" lengthAdjust="spacingAndGlyphs" >Featured Snippet: UK:</text><text x="212.17" y="531.92" font-size="13.0" font-weight="bold" fill="#222" textLength="44.00" lengthAdjust="spacingAndGlyphs" >3.9239</text>
<rect x="180.0" y="305.0" width="216" height="112" rx="3.5" fill="none" stroke="#000" stroke-opacity="0.05" stroke-width="5"/><rect x="179.5" y="304.5" width="216" height="112" rx="3.5" fill="none" stroke="#000" stroke-opacity="0.1" stroke-width="3"/><rect x="179.0" y="304.0" width="216" height="112" rx="3.5" fill="none" stroke="#000" stroke-opacity="0.15" stroke-width="1"/><rect x="178.5" y="303.5" width="216" height="112" rx="3.5" fill="#ffffff" fill-opacity="0.86" stroke="#c4dfe2" stroke-width="1"/><text x="185.65" y="323.9" font-size="10.3" font-weight="normal" fill="#222" textLength="101.89" lengthAdjust="spacingAndGlyphs" >Sunday, May 8, 2016</text><text x="185.61" y="339.8" font-size="11.9" font-weight="normal" fill="#c4e2e6" textLength="146.32" lengthAdjust="spacingAndGlyphs" >Results Per Page: Canada</text><rect x="336.80" y="333.80" width="1.3" height="1.4" fill="#555"/><rect x="336.80" y="338.40" width="1.3" height="1.4" fill="#555"/><text x="343.60" y="339.8" font-size="13.0" font-weight="bold" fill="#222" textLength="43.99" lengthAdjust="spacingAndGlyphs" >9.7196</text><text x="185.43" y="355.83" font-size="11.9" font-weight="normal" fill="#1fbfa2" textLength="153.67" lengthAdjust="spacingAndGlyphs" >Featured Snippet: Canada:</text><text x="343.19" y="355.83" font-size="13.0" font-weight="bold" fill="#222" textLength="35.49" lengthAdjust="spacingAndGlyphs" >5.621</text><text x="185.66" y="371.86" font-size="11.9" font-weight="normal" fill="#3f5bbf" textLength="123.42" lengthAdjust="spacingAndGlyphs" >Featured Snippet:AU:</text><text x="312.98" y="371.86" font-size="13.0" font-weight="bold" fill="#222" textLength="43.77" lengthAdjust="spacingAndGlyphs" >4.3214</text><text x="185.53" y="387.89" font-size="11.9" font-weight="normal" fill="#7a8cb6" textLength="129.29" lengthAdjust="spacingAndGlyphs" >Featured Snippet: USA</text><rect x="320.90" y="381.89" width="1.3" height="1.4" fill="#555"/><rect x="320.90" y="386.49" width="1.3" height="1.4" fill="#555"/><text x="326.87" y="387.89" font-size="13.0" font-weight="bold" fill="#222" textLength="44.25" lengthAdjust="spacingAndGlyphs" >4.0427</text><text x="185.43" y="403.92" font-size="11.9" font-weight="normal" fill="#8f00d2" textLength="126.68" lengthAdjust="spacingAndGlyphs" >Featured Snippet: UK:</text><text x="316.19" y="403.92" font-size="13.0" font-weight="bold" fill="#222" textLength="35.74" lengthAdjust="spacingAndGlyphs" >3.984</text>
<rect x="884.0" y="251.0" width="216" height="112" rx="3.5" fill="none" stroke="#000" stroke-opacity="0.05" stroke-width="5"/><rect x="883.5" y="250.5" width="216" height="112" rx="3.5" fill="none" stroke="#000" stroke-opacity="0.1" stroke-width="3"/><rect x="883.0" y="250.0" width="216" height="112" rx="3.5" fill="none" stroke="#000" stroke-opacity="0.15" stroke-width="1"/><rect x="882.5" y="249.5" width="216" height="112" rx="3.5" fill="#ffffff" fill-opacity="0.86" stroke="#c4dfe2" stroke-width="1"/><text x="889.59" y="269.9" font-size="10.3" font-weight="normal" fill="#222" textLength="108.91" lengthAdjust="spacingAndGlyphs" >Sunday, May 22, 2016</text><text x="889.61" y="285.8" font-size="11.9" font-weight="normal" fill="#c4e2e6" textLength="146.32" lengthAdjust="spacingAndGlyphs" >Results Per Page: Canada</text><rect x="1040.80" y="279.80" width="1.3" height="1.4" fill="#555"/><rect x="1040.80" y="284.40" width="1.3" height="1.4" fill="#555"/><text x="1047.62" y="285.8" font-size="13.0" font-weight="bold" fill="#222" textLength="44.12" lengthAdjust="spacingAndGlyphs" >9.7168</text><text x="889.43" y="301.83" font-size="11.9" font-weight="normal" fill="#1fbfa2" textLength="153.67" lengthAdjust="spacingAndGlyphs" >Featured Snippet: Canada:</text><text x="1047.38" y="301.83" font-size="13.0" font-weight="bold" fill="#222" textLength="35.43" lengthAdjust="spacingAndGlyphs" >6.635</text><text x="889.66" y="317.86" font-size="11.9" font-weight="normal" fill="#3f5bbf" textLength="123.46" lengthAdjust="spacingAndGlyphs" >Featured Snippet:AU:</text><text x="1016.98" y="317.86" font-size="13.0" font-weight="bold" fill="#222" textLength="43.66" lengthAdjust="spacingAndGlyphs" >4.6956</text><text x="889.53" y="333.89" font-size="11.9" font-weight="normal" fill="#7a8cb6" textLength="129.29" lengthAdjust="spacingAndGlyphs" >Featured Snippet: USA</text><rect x="1024.90" y="327.89" width="1.3" height="1.4" fill="#555"/><rect x="1024.90" y="332.49" width="1.3" height="1.4" fill="#555"/><text x="1030.88" y="333.89" font-size="13.0" font-weight="bold" fill="#222" textLength="43.74" lengthAdjust="spacingAndGlyphs" >4.5636</text><text x="889.43" y="349.92" font-size="11.9" font-weight="normal" fill="#8f00d2" textLength="126.68" lengthAdjust="spacingAndGlyphs" >Featured Snippet: UK:</text><text x="1020.23" y="349.92" font-size="13.0" font-weight="bold" fill="#222" textLength="44.05" lengthAdjust="spacingAndGlyphs" >4.5218</text>
<rect x="1291.0" y="273.0" width="216" height="112" rx="3.5" fill="none" stroke="#000" stroke-opacity="0.05" stroke-width="5"/><rect x="1290.5" y="272.5" width="216" height="112" rx="3.5" fill="none" stroke="#000" stroke-opacity="0.1" stroke-width="3"/><rect x="1290.0" y="272.0" width="216" height="112" rx="3.5" fill="none" stroke="#000" stroke-opacity="0.15" stroke-width="1"/><rect x="1289.5" y="271.5" width="216" height="112" rx="3.5" fill="#ffffff" fill-opacity="0.86" stroke="#c4dfe2" stroke-width="1"/><text x="1295.85" y="291.9" font-size="10.3" font-weight="normal" fill="#222" textLength="116.57" lengthAdjust="spacingAndGlyphs" >Tuesday, May 31, 2016</text><text x="1296.61" y="307.8" font-size="11.9" font-weight="normal" fill="#c4e2e6" textLength="146.32" lengthAdjust="spacingAndGlyphs" >Results Per Page: Canada</text><rect x="1447.80" y="301.80" width="1.3" height="1.4" fill="#555"/><rect x="1447.80" y="306.40" width="1.3" height="1.4" fill="#555"/><text x="1454.60" y="307.8" font-size="13.0" font-weight="bold" fill="#222" textLength="43.99" lengthAdjust="spacingAndGlyphs" >9.7206</text><text x="1296.43" y="323.83" font-size="11.9" font-weight="normal" fill="#1fbfa2" textLength="153.67" lengthAdjust="spacingAndGlyphs" >Featured Snippet: Canada:</text><text x="1454.39" y="323.83" font-size="13.0" font-weight="bold" fill="#222" textLength="35.02" lengthAdjust="spacingAndGlyphs" >6.406</text><text x="1296.66" y="339.86" font-size="11.9" font-weight="normal" fill="#3f5bbf" textLength="123.46" lengthAdjust="spacingAndGlyphs" >Featured Snippet:AU:</text><text x="1423.98" y="339.86" font-size="13.0" font-weight="bold" fill="#222" textLength="43.64" lengthAdjust="spacingAndGlyphs" >4.9495</text><text x="1296.53" y="355.89" font-size="11.9" font-weight="normal" fill="#7a8cb6" textLength="129.29" lengthAdjust="spacingAndGlyphs" >Featured Snippet: USA</text><rect x="1431.90" y="349.89" width="1.3" height="1.4" fill="#555"/><rect x="1431.90" y="354.49" width="1.3" height="1.4" fill="#555"/><text x="1437.87" y="355.89" font-size="13.0" font-weight="bold" fill="#222" textLength="44.25" lengthAdjust="spacingAndGlyphs" >4.8077</text><text x="1296.43" y="371.92" font-size="11.9" font-weight="normal" fill="#8f00d2" textLength="126.68" lengthAdjust="spacingAndGlyphs" >Featured Snippet: UK:</text><text x="1427.22" y="371.92" font-size="13.0" font-weight="bold" fill="#222" textLength="44.24" lengthAdjust="spacingAndGlyphs" >4.6312</text>
</svg>
</body></html>
